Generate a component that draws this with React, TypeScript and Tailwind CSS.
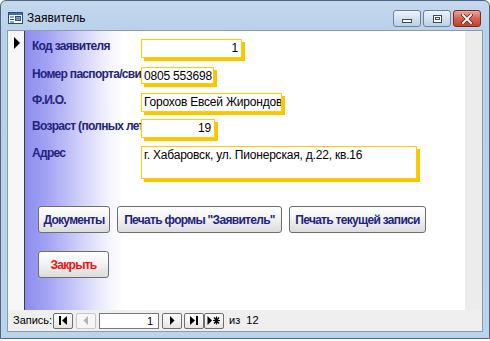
import React from "react";

const font = { fontFamily: '"Liberation Sans", Arial, sans-serif' };

function FormIcon() {
  return (
    <svg width="15" height="12" viewBox="0 0 15 12">
      <rect x="0.5" y="0.5" width="14" height="11" fill="#fff" stroke="#2b4a7a" />
      <rect x="1" y="1" width="13" height="2" fill="#3a6cc0" />
      <line x1="2" y1="5" x2="6" y2="5" stroke="#2b4a7a" />
      <line x1="2" y1="7.5" x2="6" y2="7.5" stroke="#2b4a7a" />
      <line x1="2" y1="10" x2="6" y2="10" stroke="#2b4a7a" />
      <rect x="7.5" y="4.5" width="5" height="1.5" fill="none" stroke="#2b4a7a" />
      <rect x="7.5" y="7" width="5" height="1.5" fill="none" stroke="#2b4a7a" />
    </svg>
  );
}

function CaptionButton({ kind }: { kind: "min" | "max" | "close" }) {
  const isClose = kind === "close";
  return (
    <div
      className={`w-[28px] h-[17px] rounded-[3px] border flex items-center justify-center ${
        isClose
          ? "border-[#7a2a22] bg-[linear-gradient(to_bottom,#e9a99c_0%,#d6614f_50%,#c3412c_100%)]"
          : "border-[#6f8196] bg-[linear-gradient(to_bottom,#eef4fb_0%,#d3e1f0_50%,#bcd0e6_100%)]"
      }`}
    >
      {kind === "min" && (
        <div className="w-[10px] h-[4px] mt-[5px] border border-[#3c4b5c] bg-white" />
      )}
      {kind === "max" && (
        <div className="w-[9px] h-[8px] border border-[#3c4b5c] bg-white flex items-center justify-center">
          <div className="w-[5px] h-[3px] border border-[#3c4b5c]" />
        </div>
      )}
      {isClose && (
        <svg width="12" height="10" viewBox="0 0 12 10">
          <path d="M2 1 L10 9 M10 1 L2 9" stroke="#5a1a12" strokeWidth="3.4" strokeLinecap="square" />
          <path d="M2 1 L10 9 M10 1 L2 9" stroke="#fff" strokeWidth="2" strokeLinecap="square" />
        </svg>
      )}
    </div>
  );
}

function Field({
  label,
  value,
  width,
  height,
  mt,
  right,
}: {
  label: string;
  value: string;
  width: string;
  height: string;
  mt: string;
  right?: boolean;
}) {
  return (
    <div className={`flex items-start ${mt}`}>
      <div className="w-[109px] overflow-hidden whitespace-nowrap text-[12px] leading-[15px] font-bold tracking-[-0.7px] text-[#23237e]">
        {label}
      </div>
      <div
        className={`${width} ${height} bg-white border border-[#ffcc00] shadow-[3px_3px_0_#f7c700] overflow-hidden whitespace-nowrap text-[12px] leading-[14px] tracking-[-0.2px] text-black px-[2px] pt-[1px] ${
          right ? "text-right pr-[3px]" : ""
        }`}
      >
        {value}
      </div>
    </div>
  );
}

function Btn({ text, width, red }: { text: string; width: string; red?: boolean }) {
  return (
    <div
      className={`${width} h-[27px] rounded-[3px] border border-[#6e6e6e] bg-[linear-gradient(to_bottom,#ffffff_0%,#f3f3f3_45%,#dcdcdc_100%)] flex items-center justify-center whitespace-nowrap text-[12px] font-bold tracking-[-0.7px] ${
        red ? "text-[#ee1111]" : "text-[#23237e]"
      }`}
    >
      {text}
    </div>
  );
}

function NavBtn({ children, disabled }: { children: React.ReactNode; disabled?: boolean }) {
  return (
    <div
      className={`w-[20px] h-[16px] rounded-[2px] border flex items-center justify-center ${
        disabled ? "border-[#c8c8c8] bg-[#f6f6f6]" : "border-[#6e6e6e] bg-[linear-gradient(to_bottom,#ffffff,#e4e4e4)]"
      }`}
    >
      {children}
    </div>
  );
}

export default function App() {
  return (
    <div className="w-[490px] h-[341px] bg-white" style={font}>
      <div className="h-[339px] rounded-t-[6px] border border-[#51657c] bg-[linear-gradient(to_bottom,#c4d8ef_0%,#b9d0ea_10%,#bcd3ec_100%)] flex flex-col">
        {/* title bar */}
        <div className="h-[29px] flex items-start">
          <div className="ml-[7px] mt-[11px]">
            <FormIcon />
          </div>
          <div className="ml-[4px] mt-[9px] text-[12px] leading-[16px] text-black">Заявитель</div>
          <div className="ml-auto mr-[8px] mt-[9px] flex gap-[2px]">
            <CaptionButton kind="min" />
            <CaptionButton kind="max" />
            <CaptionButton kind="close" />
          </div>
        </div>

        {/* client area */}
        <div className="mx-[6px] mb-[6px] flex-1 border border-[#8c9cb0] bg-[#efefef] flex flex-col">
          <div className="h-[279px] flex">
            {/* record selector */}
            <div className="w-[17px] bg-[#f7f7f7] border-r border-[#3d3d3d] flex justify-center">
              <svg width="8" height="12" viewBox="0 0 8 12" className="mt-[6px] ml-[1px]">
                <path d="M1 0 L7 6 L1 12 Z" fill="#000" />
              </svg>
            </div>

            {/* form body */}
            <div className="flex-1 bg-[linear-gradient(to_right,#8c8cf0_0px,#a6a6f4_25px,#d0d0f9_55px,#f2f2fe_82px,#ffffff_98px)] pl-[7px] pt-[8px]">
              <Field label="Код заявителя" value="1" width="w-[101px]" height="h-[19px]" mt="" right />
              <Field label="Номер паспорта/свидетельства" value="0805 553698" width="w-[73px]" height="h-[17px]" mt="mt-[9px]" />
              <Field label="Ф.И.О." value="Горохов Евсей Жирондович" width="w-[141px]" height="h-[19px]" mt="mt-[9px]" />
              <Field label="Возраст (полных лет)" value="19" width="w-[74px]" height="h-[19px]" mt="mt-[7px]" right />
              <Field label="Адрес" value="г. Хабаровск, ул. Пионерская, д.22, кв.16" width="w-[276px]" height="h-[33px]" mt="mt-[8px]" />

              <div className="mt-[27px] ml-[6px] flex gap-[7px]">
                <Btn text="Документы" width="w-[72px]" />
                <Btn text={'Печать формы "Заявитель"'} width="w-[165px]" />
                <Btn text="Печать текущей записи" width="w-[137px]" />
              </div>
              <div className="mt-[18px] ml-[6px] flex">
                <Btn text="Закрыть" width="w-[71px]" red />
              </div>
            </div>

            {/* right strip */}
            <div className="w-[17px] bg-[#ececec]" />
          </div>

          {/* navigation bar */}
          <div className="flex-1 flex items-center pl-[5px] text-[11px] text-black">
            <span className="w-[40px]">Запись:</span>
            <NavBtn>
              <svg width="10" height="9" viewBox="0 0 10 9">
                <rect x="1" y="0" width="2" height="9" fill="#000" />
                <path d="M9 0 L4 4.5 L9 9 Z" fill="#000" />
              </svg>
            </NavBtn>
            <div className="w-[3px]" />
            <NavBtn disabled>
              <svg width="6" height="9" viewBox="0 0 6 9">
                <path d="M5 0 L0.5 4.5 L5 9 Z" fill="#b4b4b4" />
              </svg>
            </NavBtn>
            <div className="ml-[3px] w-[60px] h-[16px] border border-[#7a7a7a] bg-white text-right pr-[5px] leading-[14px]">
              1
            </div>
            <div className="w-[3px]" />
            <NavBtn>
              <svg width="6" height="9" viewBox="0 0 6 9">
                <path d="M1 0 L5.5 4.5 L1 9 Z" fill="#000" />
              </svg>
            </NavBtn>
            <div className="w-[2px]" />
            <NavBtn>
              <svg width="10" height="9" viewBox="0 0 10 9">
                <path d="M1 0 L6 4.5 L1 9 Z" fill="#000" />
                <rect x="7" y="0" width="2" height="9" fill="#000" />
              </svg>
            </NavBtn>
            <NavBtn>
              <svg width="14" height="9" viewBox="0 0 14 9">
                <path d="M0.5 0 L5 4.5 L0.5 9 Z" fill="#000" />
                <path d="M9.5 0.5 V8.5 M6 4.5 H13 M7 1.5 L12 7.5 M12 1.5 L7 7.5" stroke="#000" strokeWidth="1.2" />
              </svg>
            </NavBtn>
            <span className="ml-[5px]">из&nbsp;&nbsp;12</span>
          </div>
        </div>
      </div>
    </div>
  );
}
